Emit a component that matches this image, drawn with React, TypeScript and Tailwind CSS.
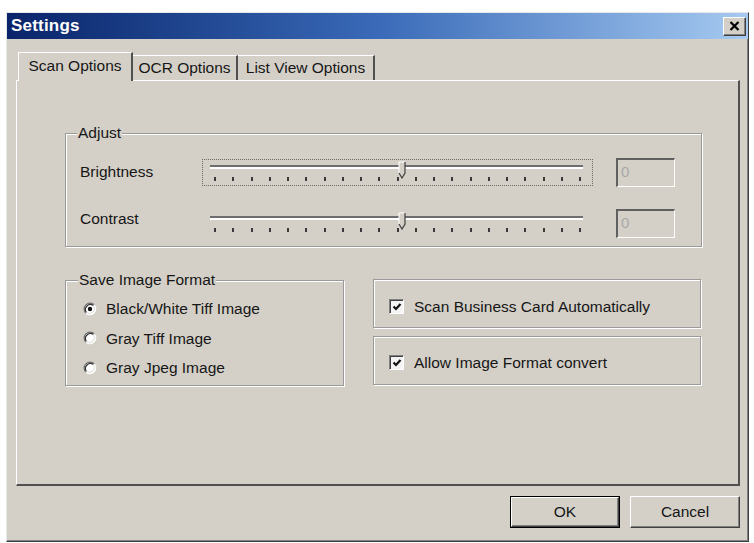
import React from 'react';

const face = 'bg-[#d4d0c8]';

const Slider: React.FC<{ focused?: boolean; pos: number }> = ({ focused, pos }) => {
  const ticks = Array.from({ length: 21 });
  return (
    <div
      className={`relative w-[391px] h-[27px] ${focused ? 'border border-dotted border-[#6a6a6a]' : 'border border-transparent'}`}
    >
      {/* track */}
      <div className="mt-[5px] ml-[7px] mr-[9px] h-[4px] border-t-2 border-t-[#6e6e6e] border-b-2 border-b-white" />
      {/* ticks */}
      <div className="mt-[8px] px-[11px] flex justify-between">
        {ticks.map((_, i) => (
          <div key={i} className="w-[2px] h-[4px] bg-[#3a3a3a]" />
        ))}
      </div>
      {/* thumb */}
      <svg className="absolute top-[1px]" style={{ left: pos }} width="8" height="18" viewBox="0 0 8 18">
        <path d="M1 1 H7 V12 L4 17 L1 12 Z" fill="#d4d0c8" />
        <path d="M1 12 V1 H7" fill="none" stroke="#fff" strokeWidth="1" />
        <path d="M7 1 V12 L4 17 L1 12" fill="none" stroke="#404040" strokeWidth="1.2" />
      </svg>
    </div>
  );
};

const EditBox: React.FC = () => (
  <div className="w-[59px] h-[29px] border-t-2 border-l-2 border-t-[#606060] border-l-[#606060] border-b border-r border-b-white border-r-white flex items-center pl-[3px] text-[15px] text-[#a8a8a8]">
    0
  </div>
);

const Radio: React.FC<{ checked?: boolean }> = ({ checked }) => (
  <svg width="14" height="14" viewBox="0 0 14 14">
    <circle cx="7" cy="7" r="6" fill="#fff" />
    <path d="M2.76 11.24 A6 6 0 0 1 11.24 2.76" fill="none" stroke="#707070" strokeWidth="1.2" />
    <path d="M3.5 10.5 A5 5 0 0 1 10.5 3.5" fill="none" stroke="#303030" strokeWidth="1.2" />
    <path d="M11.24 2.76 A6 6 0 0 1 2.76 11.24" fill="none" stroke="#fff" strokeWidth="1" />
    <path d="M10.5 3.5 A5 5 0 0 1 3.5 10.5" fill="none" stroke="#dcdcdc" strokeWidth="1" />
    {checked && <circle cx="7" cy="7" r="2.2" fill="#111" />}
  </svg>
);

const Checkbox: React.FC = () => (
  <div className="w-[15px] h-[15px] border-t border-l border-t-[#808080] border-l-[#808080] border-b border-r border-b-white border-r-white">
    <div className="w-full h-full bg-[#f4f4f4] border-t border-l border-t-[#404040] border-l-[#404040] flex items-center justify-center">
      <svg width="10" height="10" viewBox="0 0 10 10">
        <path d="M1.5 4.5 L4 7 L8.5 2" fill="none" stroke="#111" strokeWidth="2.2" />
      </svg>
    </div>
  </div>
);

const etched = 'border border-[#9a9a9a] shadow-[inset_1px_1px_0_#fff,1px_1px_0_#fff]';

export default function App() {
  return (
    <div className="w-[754px] h-[543px] bg-white overflow-hidden font-['Liberation_Sans',Arial,sans-serif] text-[15.5px] text-[#161616]">
      <div className={`ml-[6px] mt-[12px] w-[743px] h-[530px] ${face} border border-t-[#e8e8e8] border-l-[#e8e8e8] border-r-[#404040] border-b-[#404040] shadow-[inset_-1px_-1px_0_#808080] flex flex-col`}>
        {/* title bar */}
        <div className="h-[26px] shrink-0 bg-linear-to-r from-[#0a246a] via-[#3a6ab8] to-[#a6caf0] flex items-center justify-between pl-[4px] pr-[2px]">
          <span className="text-white font-bold text-[17px] tracking-[0.2px]">Settings</span>
          <div className="w-[23px] h-[19px] bg-[#d4d0c8] border border-t-white border-l-white border-r-[#404040] border-b-[#404040] shadow-[inset_-1px_-1px_0_#808080] flex items-center justify-center">
            <svg width="11" height="10" viewBox="0 0 11 10">
              <path d="M1.5 1 L9.5 9 M9.5 1 L1.5 9" stroke="#000" strokeWidth="2.2" />
            </svg>
          </div>
        </div>

        {/* body */}
        <div className="flex-1 flex flex-col pt-[13px] pl-[9px] pr-[8px]">
          {/* tabs */}
          <div className="flex items-end h-[28px] pl-[2px]">
            <div className={`relative z-10 -mb-px h-[29px] w-[115px] ${face} border-t border-l border-white border-r-2 border-r-[#505050] flex items-center justify-center pb-[2px]`}>
              Scan Options
            </div>
            <div className={`h-[25px] w-[105px] ${face} border-t border-white border-r-2 border-r-[#505050] flex items-center justify-center`}>
              OCR Options
            </div>
            <div className={`h-[25px] w-[137px] ${face} border-t border-white border-r-2 border-r-[#505050] flex items-center justify-center`}>
              List View Options
            </div>
          </div>

          {/* tab panel */}
          <div className="h-[406px] border-t border-l border-white border-r-2 border-b-2 border-r-[#505050] border-b-[#505050] pl-[48px] pt-[52px]">
            {/* Adjust group */}
            <div className={`relative w-[637px] h-[114px] ${etched} pt-[23px] pl-[14px]`}>
              <span className={`absolute -top-[9px] left-[11px] px-[1px] ${face} leading-[16px]`}>Adjust</span>
              <div className="flex items-center h-[30px]">
                <span className="w-[122px]">Brightness</span>
                <Slider focused pos={195} />
                <div className="ml-[23px]">
                  <EditBox />
                </div>
              </div>
              <div className="flex items-center h-[30px] mt-[21px]">
                <span className="w-[122px] -mt-[8px]">Contrast</span>
                <Slider pos={195} />
                <div className="ml-[23px]">
                  <EditBox />
                </div>
              </div>
            </div>

            {/* lower row */}
            <div className="flex mt-[33px]">
              <div className={`relative w-[279px] h-[106px] ${etched} pt-[13px] pl-[17px]`}>
                <span className={`absolute -top-[9px] left-[12px] px-[1px] ${face} leading-[16px]`}>Save Image Format</span>
                {[
                  { label: 'Black/White Tiff Image', checked: true },
                  { label: 'Gray Tiff Image' },
                  { label: 'Gray Jpeg Image' },
                ].map(r => (
                  <div key={r.label} className="flex items-center h-[29.5px] gap-[9px]">
                    <Radio checked={r.checked} />
                    <span>{r.label}</span>
                  </div>
                ))}
              </div>

              <div className="ml-[29px] -mt-px w-[328px] flex flex-col gap-[8px]">
                <div className={`h-[49px] ${etched} flex items-center pl-[15px] pt-[6px] gap-[10px]`}>
                  <Checkbox />
                  <span>Scan Business Card Automatically</span>
                </div>
                <div className={`h-[49px] ${etched} flex items-center pl-[15px] pt-[4px] gap-[10px]`}>
                  <Checkbox />
                  <span>Allow Image Format convert</span>
                </div>
              </div>
            </div>
          </div>

          {/* footer */}
          <div className="flex justify-end gap-[10px] pt-[10px]">
            <button className="w-[110px] h-[32px] border border-black bg-[#d4d0c8]">
              <div className="w-full h-full border border-t-white border-l-white border-r-[#404040] border-b-[#404040] shadow-[inset_-1px_-1px_0_#808080] flex items-center justify-center">
                OK
              </div>
            </button>
            <button className="w-[110px] h-[32px] bg-[#d4d0c8] border border-t-white border-l-white border-r-[#404040] border-b-[#404040] shadow-[inset_-1px_-1px_0_#808080] flex items-center justify-center">
              Cancel
            </button>
          </div>
        </div>
      </div>
    </div>
  );
}
